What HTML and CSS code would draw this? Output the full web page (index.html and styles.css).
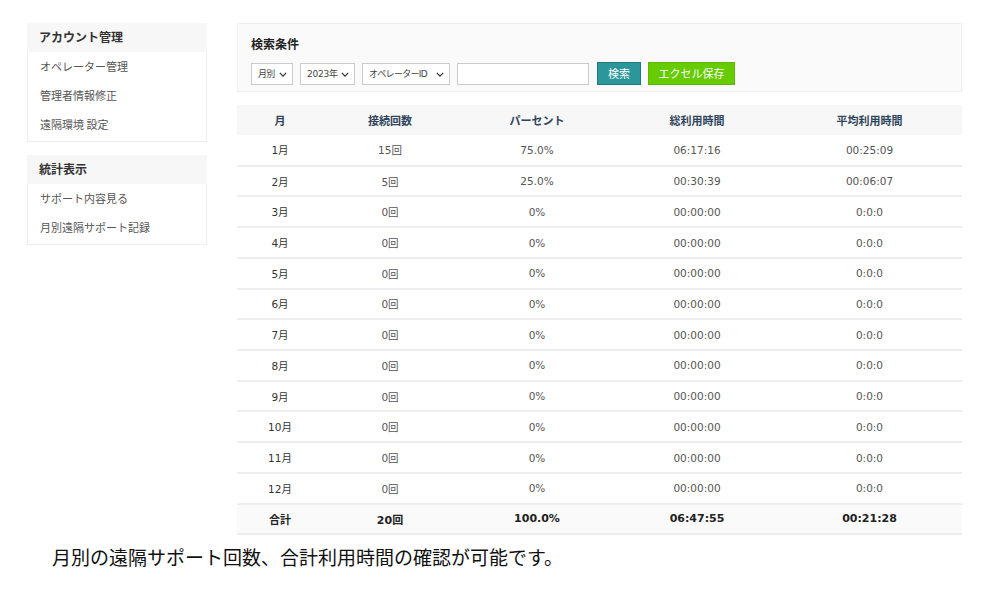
FILE: index.html
```html
<!DOCTYPE html>
<html lang="ja">
<head>
<meta charset="utf-8">
<title>月別遠隔サポート記録</title>
<link rel="stylesheet" href="styles.css">
</head>
<body>
<div class="page">
  <aside class="sidebar">
    <div class="side-box">
      <div class="side-head">アカウント管理</div>
      <a class="side-item">オペレーター管理</a>
      <a class="side-item">管理者情報修正</a>
      <a class="side-item">遠隔環境 設定</a>
    </div>
    <div class="side-box">
      <div class="side-head">統計表示</div>
      <a class="side-item">サポート内容見る</a>
      <a class="side-item">月別遠隔サポート記録</a>
    </div>
  </aside>
  <main class="main">
    <section class="search">
      <div class="search-title">検索条件</div>
      <div class="controls">
        <div class="sel w1"><span>月別</span><svg viewBox="0 0 10 6" class="chev"><path d="M1 1 L5 5 L9 1" fill="none" stroke="#333" stroke-width="1.6"/></svg></div>
        <div class="sel w2"><span>2023年</span><svg viewBox="0 0 10 6" class="chev"><path d="M1 1 L5 5 L9 1" fill="none" stroke="#333" stroke-width="1.6"/></svg></div>
        <div class="sel w3"><span>オペレーターID</span><svg viewBox="0 0 10 6" class="chev"><path d="M1 1 L5 5 L9 1" fill="none" stroke="#333" stroke-width="1.6"/></svg></div>
        <input class="text-in" type="text">
        <button class="btn btn-search">検索</button>
        <button class="btn btn-excel">エクセル保存</button>
      </div>
    </section>
    <table class="stats">
      <thead>
        <tr><th class="c1">月</th><th class="c2">接続回数</th><th class="c3">パーセント</th><th class="c4">総利用時間</th><th class="c5">平均利用時間</th></tr>
      </thead>
      <tbody>
        <tr><td class="m">1月</td><td>15回</td><td>75.0%</td><td>06:17:16</td><td>00:25:09</td></tr>
        <tr><td class="m">2月</td><td>5回</td><td>25.0%</td><td>00:30:39</td><td>00:06:07</td></tr>
        <tr><td class="m">3月</td><td>0回</td><td>0%</td><td>00:00:00</td><td>0:0:0</td></tr>
        <tr><td class="m">4月</td><td>0回</td><td>0%</td><td>00:00:00</td><td>0:0:0</td></tr>
        <tr><td class="m">5月</td><td>0回</td><td>0%</td><td>00:00:00</td><td>0:0:0</td></tr>
        <tr><td class="m">6月</td><td>0回</td><td>0%</td><td>00:00:00</td><td>0:0:0</td></tr>
        <tr><td class="m">7月</td><td>0回</td><td>0%</td><td>00:00:00</td><td>0:0:0</td></tr>
        <tr><td class="m">8月</td><td>0回</td><td>0%</td><td>00:00:00</td><td>0:0:0</td></tr>
        <tr><td class="m">9月</td><td>0回</td><td>0%</td><td>00:00:00</td><td>0:0:0</td></tr>
        <tr><td class="m">10月</td><td>0回</td><td>0%</td><td>00:00:00</td><td>0:0:0</td></tr>
        <tr><td class="m">11月</td><td>0回</td><td>0%</td><td>00:00:00</td><td>0:0:0</td></tr>
        <tr><td class="m">12月</td><td>0回</td><td>0%</td><td>00:00:00</td><td>0:0:0</td></tr>
      </tbody>
      <tfoot>
        <tr><td>合計</td><td>20回</td><td>100.0%</td><td>06:47:55</td><td>00:21:28</td></tr>
      </tfoot>
    </table>
  </main>
</div>
<p class="caption">月別の遠隔サポート回数、合計利用時間の確認が可能です。</p>
</body>
</html>
```
FILE: styles.css
```css
* { box-sizing: border-box; }
body {
  margin: 0;
  background: #fff;
  font-family: "DejaVu Sans", "Noto Sans CJK JP", sans-serif;
  color: #333;
}
.page {
  display: flex;
  gap: 30px;
  padding: 23px 0 0 27px;
  align-items: flex-start;
}
.sidebar {
  width: 180px;
  display: flex;
  flex-direction: column;
  gap: 13px;
}
.side-box {
  border: 1px solid #eee;
  background: #fff;
  padding-bottom: 2px;
  font-family: "Noto Sans CJK JP", sans-serif;
}
.side-head {
  background: #f7f7f7;
  height: 29px;
  line-height: 28px;
  padding-left: 12px;
  font-size: 12px;
  font-weight: 700;
  color: #333;
  margin: -1px -1px 0 -1px;
}
.side-item {
  display: block;
  height: 29px;
  line-height: 29px;
  padding-left: 12px;
  font-size: 11px;
  color: #555;
}
.main {
  width: 725px;
  display: flex;
  flex-direction: column;
  gap: 13px;
}
.search {
  background: #fafafa;
  border: 1px solid #eee;
  height: 69px;
  padding: 12px 0 0 13px;
}
.search-title {
  font-family: "Noto Sans CJK JP", sans-serif;
  font-size: 12px;
  font-weight: 700;
  color: #222;
  line-height: 16px;
}
.controls {
  display: flex;
  gap: 7px;
  margin-top: 10px;
  align-items: center;
}
.sel {
  position: relative;
  height: 22px;
  border: 1px solid #ccc;
  background: #fff;
  font-size: 9px;
  color: #444;
  line-height: 20px;
  padding-left: 6px;
}
.sel span {
  font-family: "DejaVu Sans", "Noto Sans CJK JP", sans-serif;
  letter-spacing: -0.7px;
}
.w2 span { letter-spacing: -0.2px; }
.chev {
  position: absolute;
  right: 5px;
  top: 8px;
  width: 8px;
  height: 5px;
}
.w1 { width: 42px; }
.w2 { width: 55px; }
.w3 { width: 88px; }
.text-in {
  width: 132px;
  height: 22px;
  border: 1px solid #ccc;
  background: #fff;
  padding: 0;
}
.btn {
  height: 23px;
  border: 1px solid transparent;
  color: #fff;
  font-family: "Noto Sans CJK JP", sans-serif;
  font-size: 11px;
  padding: 0;
  line-height: 21px;
}
.btn-search {
  width: 44px;
  background: #2c979a;
  border-color: #22797c;
  margin-left: 1px;
}
.btn-excel {
  width: 87px;
  background: #66cc00;
  border-color: #5cb800;
}
.stats {
  width: 725px;
  border-collapse: collapse;
  font-size: 10.5px;
  text-align: center;
}
.stats th {
  background: #f7f7f7;
  height: 30px;
  color: #2f455c;
  font-weight: 700;
  font-size: 11px;
  font-family: "DejaVu Sans", "Noto Sans CJK JP", sans-serif;
  padding: 0;
}
.c1 { width: 86px; }
.c2 { width: 134px; }
.c3 { width: 160px; }
.c4 { width: 160px; }
.c5 { width: 185px; }
.stats td {
  height: 30.73px;
  border-bottom: 2px solid #eee;
  color: #555;
  padding: 0;
}
.stats td.m { color: #333; }
.stats tfoot td {
  background: #fafafa;
  font-weight: 700;
  color: #222;
  font-size: 11px;
}
.caption {
  margin: 8px 0 0 52px;
  font-family: "Noto Sans CJK JP", sans-serif;
  font-size: 19px;
  line-height: 28px;
  color: #111;
}
```
